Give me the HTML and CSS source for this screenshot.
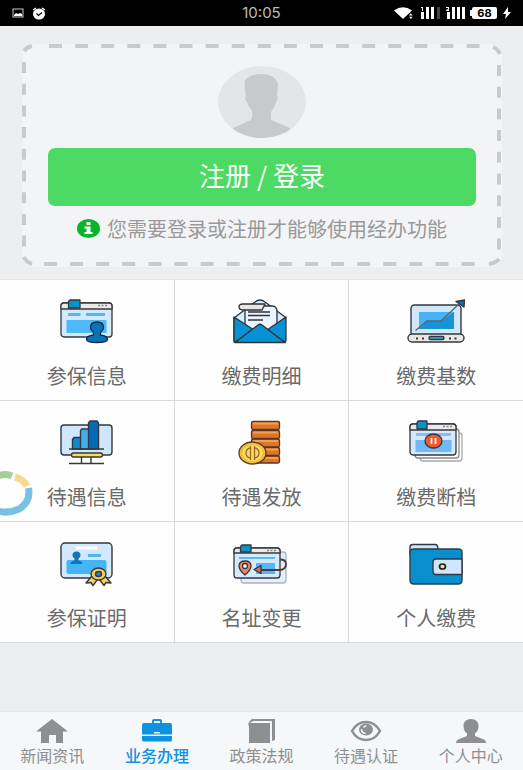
FILE: index.html
```html
<!DOCTYPE html>
<html lang="zh-CN">
<head>
  <meta charset="UTF-8" />
  <meta name="viewport" content="width=device-width, initial-scale=1" />
  <title>业务办理</title>
  <link rel="stylesheet" href="styles.css">
</head>
<body>
  <header class="status-bar">
    <div class="status-left">
      <svg width="12" height="10" viewBox="0 0 12 10"><rect x="1" y="1" width="10" height="8" fill="none" stroke="#ccc"/><path d="M2 7l2-2 2 1 2-1 2 1v2H2z" fill="#fff"/></svg>
      <svg width="14" height="13" viewBox="0 0 14 13"><ellipse cx="7" cy="7" rx="6" ry="5.500" fill="#fff"/><path d="M1 3l3-2M13 3l-3-2" stroke="#fff" stroke-width="1.500"/><path d="M4.500 6.500l2 2 3.500-3" fill="none" stroke="#000" stroke-width="1.200"/></svg>
    </div>
    <time class="clock">10:05</time>
    <div class="status-right">
      <svg width="20" height="14" viewBox="0 0 20 14" fill="#fff"><path d="M0 4.500Q9 -2 18 4.500L9 13z"/><path d="M14 10l2.500-4 3.500 4-3 4z" fill="#000"/><path d="M15 9.500l1.800-2.200 1.800 2.200zM15 10.800l1.800 2.200 1.800-2.200z"/></svg>
      <svg width="20" height="14" viewBox="0 0 20 14" fill="#fff"><path d="M1 1h2v4H2V2H1zM1 6h3v7H1zM6 1h3v12H6zM11 1h3v12h-3z"/><path d="M17 1h3v12h-3z" fill="#444"/></svg>
      <svg width="20" height="14" viewBox="0 0 20 14" fill="#fff"><path d="M0 1h3v2.500L2 4h1v1H0V4l2-1V2H0zM1 6h3v7H1zM6 1h3v12H6zM11 1h3v12h-3zM16 1h3v12h-3z"/></svg>
      <span class="battery">68</span>
      <svg width="8" height="12" viewBox="0 0 8 12" fill="#fff"><path d="M5 0L0 7h3l-1 5 6-7H5z"/></svg>
    </div>
  </header>

  <main>
    <section class="login-card">
      <svg class="card-outline" width="100%" height="100%">
        <g stroke="#c9cacc" stroke-width="4">
          <line x1="27" y1="2" x2="96%" y2="2" stroke-dasharray="13 13.100"/>
          <line x1="22" y1="220" x2="95%" y2="220" stroke-dasharray="13 13.100"/>
          <line x1="2" y1="18" x2="2" y2="204" stroke-dasharray="11 10.700"/>
          <path d="M2 7Q5 3 10 2M2 213Q4 218 10 220" fill="none"/>
          <svg x="100%" overflow="visible">
            <line x1="-3" y1="21" x2="-3" y2="206" stroke-dasharray="11 10.700"/>
            <path d="M-9 3Q-4 5 -2 10M-13 220Q-6 219 -3 215" fill="none"/>
          </svg>
        </g>
      </svg>
      <svg class="avatar" width="88" height="72" viewBox="0 0 88 72">
        <clipPath id="avatar-clip"><ellipse cx="44" cy="36" rx="44" ry="36"/></clipPath>
        <g clip-path="url(#avatar-clip)">
          <rect width="88" height="72" fill="#e4e5e7"/>
          <path d="M27 14Q33 8 44 8Q57 8 60 18L59 29Q61 33 58 36Q57 41 53 46V54L72 62L80 74H6L15 62L33 54Q35 50 34 45Q30 40 29 36Q26 33 28 30Q26 22 27 14z" fill="#c8c9cb"/>
        </g>
      </svg>
      <button class="login-btn" type="button">注册 / 登录</button>
      <p class="hint">
        <svg width="23" height="20" viewBox="0 0 23 20"><ellipse cx="11.500" cy="9.500" rx="11.500" ry="9.500" fill="#08b52a"/><path d="M9.500 3h4v3h-4zM7.500 7.500h6V13h2v2h-8v-2h2V9.500h-2z" fill="#fff"/></svg>
        <span>您需要登录或注册才能够使用经办功能</span>
      </p>
    </section>

    <section class="service-grid">
      <a class="service" href="#">
        <svg width="60" height="48" viewBox="0 0 60 48" stroke="#34383c" stroke-width="1.300" stroke-linejoin="round">
          <rect x="4" y="5" width="51" height="34" rx="3" fill="#d4e9fb"/>
          <path d="M4 11V8q0-3 3-3h45q3 0 3 3v3z" fill="#eceae8"/>
          <path d="M11.500 10V3.500L13 2h10v8z" fill="#0893c9"/>
          <path d="M41 7.500h2M44.500 7.500h2M48 7.500h2" stroke="#888"/>
          <path d="M11 16.500h12.500M29 16.500h19" stroke="#55b8f4" stroke-width="3"/>
          <rect x="9.500" y="22" width="40" height="13" rx="1" fill="#4fb9f7" stroke="none"/>
          <path d="M36.500 37v-2.500C34.500 33 33.500 31.500 33.500 29.500C33.500 26 36 24 40 24s6.500 2 6.500 5.500C46.500 31.500 45.500 33 43.500 34.500V37c4 .500 7 2 7 4.500 0 2-4 3-10.500 3s-10.500-1-10.500-3c0-2.500 3-4 7-4.500z" fill="#0873bd" stroke="#112840"/>
        </svg>
        <span>参保信息</span>
      </a>
      <a class="service" href="#">
        <svg width="60" height="48" viewBox="0 0 60 48" stroke="#2c3338" stroke-width="1.300" stroke-linejoin="round">
          <path d="M3 20L24 4q5-4 10 0l20 15v25H3z" fill="#d9ecfb"/>
          <path d="M14 12V36h32V14q0-6-5-6H14z" fill="#edf4ff"/>
          <path d="M13 12q-5 0-5-3 0-3 4-3h22l-3 6z" fill="#e9e6e5"/>
          <path d="M17 14h22M17 17.500h22M17 22h15"/>
          <path d="M3 19l20 13-19 12q-1 0-1-2zM55 19L36 32l18 12q1 0 1-2z" fill="#0790d4"/>
          <path d="M4 44.500L27 27q2-1.500 4 0l23 17.500z" fill="#0790d4"/>
        </svg>
        <span>缴费明细</span>
      </a>
      <a class="service" href="#">
        <svg width="60" height="48" viewBox="0 0 60 48" stroke="#34383c" stroke-width="1.400" stroke-linejoin="round">
          <rect x="5" y="7" width="50" height="31" rx="3.500" fill="#cfe6fc"/>
          <path d="M13 14h35v17H13z" fill="#45b2f4" stroke="none"/>
          <path d="M13 31l8-8h14l13-9v17z" fill="#1594d6" stroke="none"/>
          <path d="M9.500 32.500L21 23h14L53 6" fill="none" stroke="#596775"/>
          <path d="M50 3.500L58.500 2 58 9z" fill="#0870c3"/>
          <rect x="2" y="36" width="56" height="8" rx="4" fill="#e8e7e6"/>
          <rect x="23" y="38.500" width="15" height="3" rx="1.500" fill="#3dadea"/>
          <path d="M10 40.500h2M16 40.500h2M43 40.500h2M48.500 40.500h2" stroke-width="2"/>
        </svg>
        <span>缴费基数</span>
      </a>
      <a class="service" href="#">
        <svg width="60" height="48" viewBox="0 0 60 48" stroke="#34383c" stroke-width="1.400" stroke-linejoin="round">
          <rect x="4" y="6" width="51" height="30" rx="3" fill="#cfe6fd"/>
          <path d="M24.500 37v7M34 37v7M12 44.500h35"/>
          <path d="M15.500 30V20.500l1.500-2h8V30z" fill="#1288d1"/>
          <path d="M23.500 30V12l1-2h8v20z" fill="#42adee"/>
          <path d="M31.500 30V4l1.500-2h7l1.500 2v26z" fill="#0869b8"/>
          <path d="M12 30h35"/>
          <rect x="14.500" y="34" width="31" height="4" rx="2" fill="#f8dc5c"/>
        </svg>
        <span>待遇信息</span>
      </a>
      <a class="service" href="#">
        <svg width="60" height="48" viewBox="0 0 60 48" stroke="#5b3428" stroke-width="1.300" stroke-linejoin="round">
          <g fill="#dc762a">
            <rect x="20.500" y="2.500" width="28" height="8" rx="1.500"/>
            <rect x="20.500" y="11.500" width="28" height="8" rx="1.500"/>
            <rect x="20.500" y="20" width="28" height="8" rx="1.500"/>
            <rect x="20.500" y="28.500" width="28" height="8" rx="1.500"/>
            <rect x="20.500" y="37" width="28" height="7" rx="1.500"/>
          </g>
          <path d="M22 4.500h25M22 13.500h25M22 22h25M22 30.500h25M34 39h13" stroke="#f2a34a" stroke-width="2"/>
          <ellipse cx="21.500" cy="34" rx="13.500" ry="11" fill="#f5bf35"/>
          <ellipse cx="21.500" cy="34" rx="10" ry="8" fill="#f9da63" stroke="none"/>
          <path d="M19 29q-4 1-4 5t4 5M24 29q4 1 4 5t-4 5M19.500 27v14M23.500 27v14" fill="none" stroke="#9b6c23"/>
        </svg>
        <span>待遇发放</span>
      </a>
      <a class="service" href="#">
        <svg width="60" height="48" viewBox="0 0 60 48" stroke="#34383c" stroke-width="1.300" stroke-linejoin="round">
          <rect x="14" y="14" width="42" height="28" rx="3" fill="#fff" stroke="#aaa"/>
          <rect x="9" y="10" width="44" height="29" rx="3" fill="#fff" stroke="#888"/>
          <rect x="4" y="5" width="46" height="31" rx="3" fill="#d4e9fd"/>
          <path d="M4 11V8q0-3 3-3h40q3 0 3 3v3z" fill="#eceae8"/>
          <path d="M11 10V3.500L12 2h9v8z" fill="#0893c9"/>
          <path d="M37 7.500h2M40.500 7.500h2M44 7.500h2" stroke="#888"/>
          <path d="M10 15.500h35" stroke="#82bef8" stroke-width="3"/>
          <path d="M9.500 21h36v12h-36z" fill="#70b8fa" stroke="none"/>
          <ellipse cx="27.500" cy="22" rx="8.500" ry="7" fill="#ee5833"/>
          <path d="M25.500 19v6M29.500 19v6" stroke="#fff" stroke-width="1.700"/>
        </svg>
        <span>缴费断档</span>
      </a>
      <a class="service" href="#">
        <svg width="60" height="48" viewBox="0 0 60 48" stroke="#34383c" stroke-width="1.400" stroke-linejoin="round">
          <rect x="4" y="3" width="51" height="35" rx="4" fill="#d2e8fc"/>
          <path d="M19 8h21" stroke="#fff" stroke-width="3"/>
          <rect x="9.500" y="20" width="40" height="14" rx="2" fill="#45b5f6" stroke="none"/>
          <path d="M31 15.500h13" stroke="#52b5f0" stroke-width="3"/>
          <path d="M17.500 20.500v-2C16 17.500 15.500 16.500 15.500 15c0-2 1.500-3.500 4-3.500s4 1.500 4 3.500c0 1.500-.500 2.500-2 3.500v2c2.500.500 4 1.500 4 3.500h-12c0-2 1.500-3 4-3.500z" fill="#1375b5" stroke="none"/>
          <path d="M35 36l-6 7 5-.500 2 3 6-8zM48 36l6 7-5-.500-2 3-6-8z" fill="#f8d557"/>
          <ellipse cx="41.500" cy="34" rx="7.500" ry="6" fill="#f8cb55"/>
          <ellipse cx="41.500" cy="34" rx="3" ry="2.500" fill="#208ad0"/>
        </svg>
        <span>参保证明</span>
      </a>
      <a class="service" href="#">
        <svg width="60" height="48" viewBox="0 0 60 48" stroke="#34383c" stroke-width="1.300" stroke-linejoin="round">
          <rect x="10" y="12" width="45" height="31" rx="3" fill="#e3eefb" stroke="#aab2bc"/>
          <rect x="3" y="8" width="46" height="30" rx="3" fill="#d5ebfd"/>
          <path d="M3 13v-2q0-3 3-3h40q3 0 3 3v2z" fill="#eceae8"/>
          <path d="M9.500 12V6.500L11 5h9v7z" fill="#0893c9"/>
          <path d="M36 10.500h2M39.500 10.500h2M43 10.500h2" stroke="#888"/>
          <path d="M8 18h36" stroke="#5cbaf3" stroke-width="2"/>
          <path d="M25 23h19v11H25z" fill="#54b8f6" stroke="none"/>
          <path d="M49 19.500q6 0 6 4.500 0 6-7 6H28" fill="none" stroke="#56383a" stroke-width="1.800"/>
          <path d="M30 25.500v8L23 29.500z" fill="#ef6547"/>
          <path d="M14 35q-6-5-6-9 0-5 6-5t6 5q0 4-6 9z" fill="#f18164"/>
          <circle cx="14" cy="26" r="2.500" fill="#fff"/>
        </svg>
        <span>名址变更</span>
      </a>
      <a class="service" href="#">
        <svg width="60" height="48" viewBox="0 0 60 48" stroke="#2d3b47" stroke-width="1.400" stroke-linejoin="round">
          <path d="M4 14V7q0-2.500 3-2.500h22q3 0 3 4.500v5z" fill="#cfe7fc"/>
          <path d="M4 11q1-2 4-2h44q4 0 4 3v28q0 4-4 4H8q-4 0-4-4z" fill="#078fce"/>
          <path d="M56 19H30q-3 0-3 3v9q0 3.500 3 3.500h26z" fill="#cfe6fc"/>
          <ellipse cx="36.500" cy="26.500" rx="3" ry="2.500" fill="#f3e76b" stroke="#222" stroke-width="1.700"/>
        </svg>
        <span>个人缴费</span>
      </a>

      <svg class="float-ring" width="34" height="46" viewBox="0 0 34 46" fill="none" stroke-width="7">
        <path d="M-2 5Q5 2 12 5" stroke="#a9cd96"/>
        <path d="M15 6Q23 8 27 15" stroke="#f8d795"/>
        <path d="M28.500 17Q31 31 19 38Q8 43 -2 40" stroke="#79c1e4"/>
      </svg>
    </section>
  </main>

  <nav class="tab-bar">
    <a class="tab" href="#">
      <svg width="34" height="26" viewBox="0 0 34 26" fill="currentColor"><path d="M17 1l16 12.500h-5V25h-7v-8h-7v8H6V13.500H1z"/></svg>
      <span>新闻资讯</span>
    </a>
    <a class="tab active" href="#">
      <svg width="34" height="26" viewBox="0 0 34 26" fill="currentColor"><path d="M12 5V3q0-2 2-2h6q2 0 2 2v2h8q2 0 2 2v9.500H2V7q0-2 2-2zM14 5h6V3h-6zM14 15.500h6V14h-6z" fill-rule="evenodd"/><path d="M2 18h30v4q0 1.500-2 1.500H4q-2 0-2-1.500z"/></svg>
      <span>业务办理</span>
    </a>
    <a class="tab" href="#">
      <svg width="34" height="26" viewBox="0 0 34 26" fill="currentColor"><path d="M5 25V6q0-1 1-1h20v20zM4 8Q4 4 8 1h23v21l-3 1V3H9L6 5z"/></svg>
      <span>政策法规</span>
    </a>
    <a class="tab" href="#">
      <svg width="34" height="26" viewBox="0 0 34 26" fill="none" stroke="currentColor"><path d="M3 13Q8 4 17 4t14 9Q26 22 17 22T3 13z" stroke-width="2.500"/><ellipse cx="17" cy="11.500" rx="7" ry="6" fill="currentColor" stroke="none"/><path d="M12.500 11q0 4 4 4.500M14.500 9.500q1-1.500 3-1.500" stroke="#f6f7f9" stroke-width="1.500"/></svg>
      <span>待遇认证</span>
    </a>
    <a class="tab" href="#">
      <svg width="34" height="26" viewBox="0 0 34 26" fill="currentColor"><path d="M17 1c5 0 7.500 3 7.500 6.500 0 4-1 6-3.500 8V18l9 3.500q2 1 2 3.500H2q0-2.500 2-3.500l9-3.500v-2.500c-2.500-2-3.500-4-3.500-8C9.500 4 12 1 17 1z"/></svg>
      <span>个人中心</span>
    </a>
  </nav>
</body>
</html>
```

FILE: styles.css
```css
* { box-sizing: border-box; }
body {
  margin: 0;
  min-height: 100vh;
  display: flex; flex-direction: column;
  font-family: "Noto Sans CJK SC", sans-serif;
  background: #eceef0; color: #6a6a6a;
}
a { color: inherit; text-decoration: none; }
svg { display: block; flex: none; }

.status-bar {
  display: grid; grid-template-columns: 1fr auto 1fr; align-items: center;
  height: 26px; padding: 0 12px;
  background: #000; color: #bbb;
}
.status-left { display: flex; align-items: center; gap: 8px; }
.status-right { display: flex; align-items: center; justify-content: flex-end; gap: 6px; }
.clock { font-family: Inter, sans-serif; font-size: 15px; line-height: 20px; }
.battery {
  position: relative;
  width: 25px; border-radius: 2px;
  background: #fff; color: #000;
  font-family: Inter, sans-serif; font-size: 11px; font-weight: 700; line-height: 12px; text-align: center;
}
.battery::before {
  content: ""; position: absolute; left: -2px; top: 3px;
  width: 2px; height: 6px; background: #fff;
}

main { flex: 1; }
.login-card {
  position: relative;
  display: flex; flex-direction: column; align-items: center;
  margin: 18px 21px 12px 22px; padding: 22px 26px 24px;
  min-height: 222px;
  background: #f3f4f6; border-radius: 12px;
}
.card-outline { position: absolute; top: 0; left: 0; }
.avatar { margin-bottom: 10px; }
.login-btn {
  width: 100%; height: 58px; padding: 0 0 4px;
  border: none; border-radius: 7px;
  background: #4cd964; color: #fff;
  font-family: inherit; font-size: 26px; line-height: 32px;
  cursor: pointer;
}
.hint {
  display: flex; align-items: center; justify-content: center; gap: 7px;
  margin: 9px 0 0;
  color: #999; font-size: 20px; line-height: 28px; white-space: nowrap;
}

.service-grid {
  position: relative;
  display: grid; grid-template-columns: repeat(3, 1fr); gap: 1px;
  border-top: 1px solid #e4e4e7; border-bottom: 1px solid #d8d9dc;
  background: #d8d9dc;
}
.service {
  display: flex; flex-direction: column; align-items: center; gap: 16px;
  padding: 18px 0 10px;
  background: #fefefe;
  font-size: 20px; line-height: 28px;
}
.float-ring { position: absolute; left: 0; top: 191px; }

.tab-bar {
  display: flex;
  padding: 6px 0 4px;
  border-top: 1px solid #e6e7e9;
  background: #f6f7f9; color: #8e8f91;
}
.tab {
  flex: 1;
  display: flex; flex-direction: column; align-items: center;
  font-size: 16px; line-height: 22px;
}
.tab.active { color: #0d93e2; }
.tab.active span { font-weight: 500; }
```
